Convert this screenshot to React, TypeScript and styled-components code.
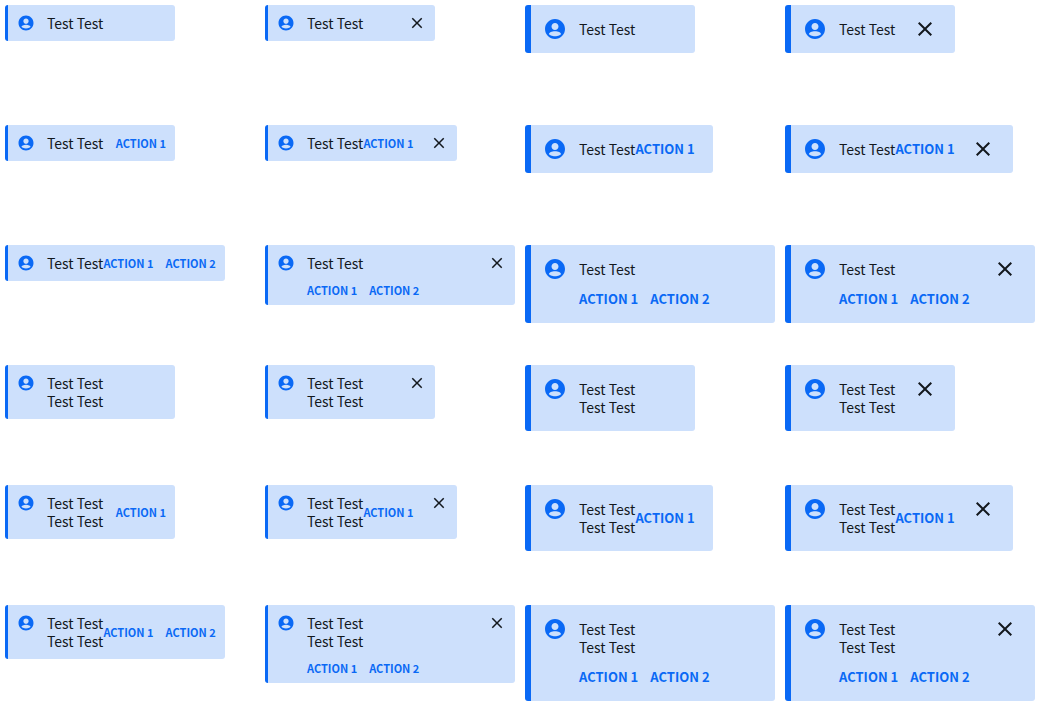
import React from "react";
import styled, { createGlobalStyle, css } from "styled-components";
import { MdClose } from "react-icons/md";

type Size = "small" | "large";

const GlobalStyle = createGlobalStyle`
  * { box-sizing: border-box; }
  body {
    margin: 0;
    background: #ffffff;
    font-family: "Noto Sans CJK SC", "Open Sans", sans-serif;
  }
`;

const Page = styled.main`
  display: grid;
  grid-template-columns: repeat(4, 1fr);
  grid-auto-rows: minmax(120px, auto);
`;

const Cell = styled.div`
  padding: 5px;
`;

const smallBanner = css`
  padding: 9px;
  border-left-width: 3px;
`;

const largeBanner = css`
  padding: 12px 18px 12px 12px;
  border-left-width: 6px;
`;

const Banner = styled.section<{ $size: Size; $stacked: boolean }>`
  display: inline-flex;
  align-items: flex-start;
  gap: 12px;
  min-width: 170px;
  width: ${(p) => (p.$stacked ? "100%" : "auto")};
  border: 0 solid #0a69f5;
  border-radius: 3px;
  background: #cde0fc;
  ${(p) => (p.$size === "small" ? smallBanner : largeBanner)}
  ${(p) => p.$stacked && p.$size === "small" && "padding-bottom: 6px;"}
`;

const StatusIcon = styled.svg<{ $size: Size }>`
  flex: none;
  display: block;
  width: ${(p) => (p.$size === "small" ? 18 : 24)}px;
  height: ${(p) => (p.$size === "small" ? 18 : 24)}px;
  fill: #0a69f5;
`;

const Content = styled.div<{ $size: Size; $stacked: boolean }>`
  flex: 1;
  display: flex;
  flex-direction: ${(p) => (p.$stacked ? "column" : "row")};
  align-items: ${(p) => (p.$stacked ? "flex-start" : "center")};
  justify-content: space-between;
  gap: ${(p) => (!p.$stacked ? 0 : p.$size === "small" ? 9 : 12)}px;
  padding: ${(p) => (p.$size === "small" ? 0 : 3)}px 0;
`;

const Message = styled.p`
  margin: 0;
  font-size: 14px;
  line-height: 18px;
  color: #13181d;
  white-space: pre;
`;

const Actions = styled.div`
  display: flex;
  gap: 12px;
`;

const ActionButton = styled.button<{ $size: Size }>`
  border: 0;
  padding: 0;
  background: none;
  font-family: inherit;
  font-size: ${(p) => (p.$size === "small" ? 11 : 13)}px;
  font-weight: 600;
  line-height: 18px;
  color: #0a69f5;
  white-space: nowrap;
  cursor: pointer;
`;

const CloseButton = styled.button<{ $size: Size }>`
  flex: none;
  display: block;
  margin-left: 4px;
  border: 0;
  padding: 0;
  background: none;
  color: #13181d;
  font-size: ${(p) => (p.$size === "small" ? 18 : 24)}px;
  line-height: 0;
  cursor: pointer;
`;

interface ToastProps {
  size: Size;
  message: string;
  actions: string[];
  closable: boolean;
}

function Toast({ size, message, actions, closable }: ToastProps) {
  const stacked = actions.length > 1 && (closable || size === "large");
  return (
    <Banner $size={size} $stacked={stacked}>
      <StatusIcon $size={size} viewBox="0 0 24 24" aria-hidden="true">
        <path d="M12 2C6.48 2 2 6.48 2 12s4.48 10 10 10 10-4.48 10-10S17.52 2 12 2zm0 4c1.93 0 3.5 1.57 3.5 3.5S13.93 13 12 13s-3.5-1.57-3.5-3.5S10.07 6 12 6zm0 8.2c3.3 0 6 1.4 6 2.6 0 1.2-3 2.5-6 2.5s-6-1.3-6-2.5c0-1.2 2.7-2.6 6-2.6z" />
      </StatusIcon>
      <Content $size={size} $stacked={stacked}>
        <Message>{message}</Message>
        {actions.length > 0 && (
          <Actions>
            {actions.map((label) => (
              <ActionButton key={label} type="button" $size={size}>
                {label}
              </ActionButton>
            ))}
          </Actions>
        )}
      </Content>
      {closable && (
        <CloseButton type="button" $size={size} aria-label="Close">
          <MdClose />
        </CloseButton>
      )}
    </Banner>
  );
}

const messages = ["Test Test", "Test Test\nTest Test"];
const actionSets = [[], ["ACTION 1"], ["ACTION 1", "ACTION 2"]];
const columns: { size: Size; closable: boolean }[] = [
  { size: "small", closable: false },
  { size: "small", closable: true },
  { size: "large", closable: false },
  { size: "large", closable: true },
];

export default function App() {
  return (
    <>
      <GlobalStyle />
      <Page>
        {messages.flatMap((message, m) =>
          actionSets.flatMap((actions, a) =>
            columns.map((column, c) => (
              <Cell key={`${m}-${a}-${c}`}>
                <Toast message={message} actions={actions} {...column} />
              </Cell>
            )),
          ),
        )}
      </Page>
    </>
  );
}
